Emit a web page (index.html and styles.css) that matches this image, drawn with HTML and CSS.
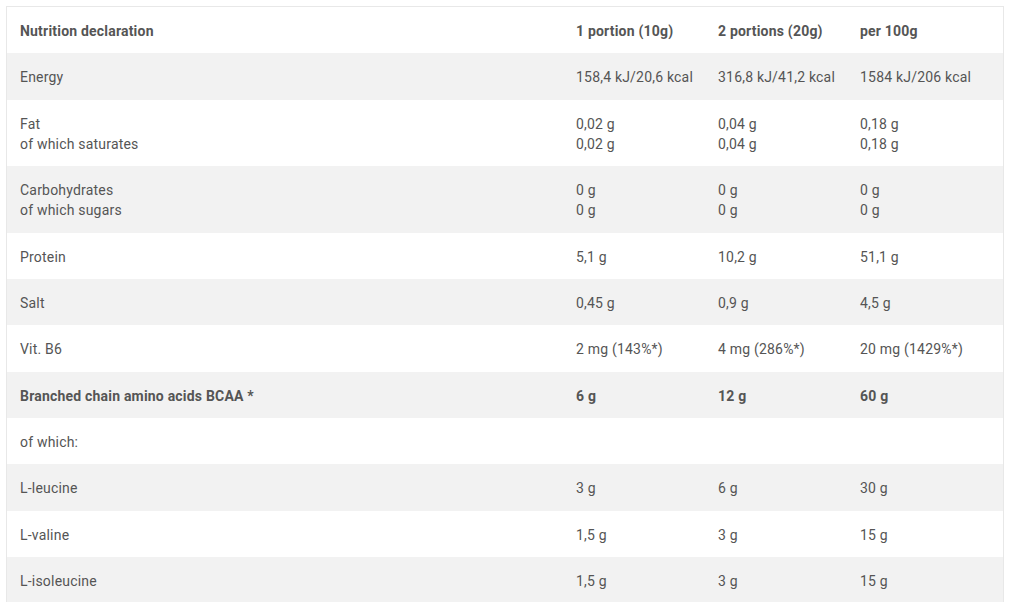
FILE: index.html
```html
<!DOCTYPE html>
<html>
<head>
<meta charset="utf-8">
<link rel="stylesheet" href="styles.css">
</head>
<body>
<div class="wrap">
<table class="nutri">
  <colgroup>
    <col class="c-name"><col class="c-val"><col class="c-val"><col class="c-last">
  </colgroup>
  <thead>
    <tr class="bold"><th>Nutrition declaration</th><th>1 portion (10g)</th><th>2 portions (20g)</th><th>per 100g</th></tr>
  </thead>
  <tbody>
    <tr><td>Energy</td><td>158,4 kJ/20,6 kcal</td><td>316,8 kJ/41,2 kcal</td><td>1584 kJ/206 kcal</td></tr>
    <tr><td>Fat<br>of which saturates</td><td>0,02 g<br>0,02 g</td><td>0,04 g<br>0,04 g</td><td>0,18 g<br>0,18 g</td></tr>
    <tr><td>Carbohydrates<br>of which sugars</td><td>0 g<br>0 g</td><td>0 g<br>0 g</td><td>0 g<br>0 g</td></tr>
    <tr><td>Protein</td><td>5,1 g</td><td>10,2 g</td><td>51,1 g</td></tr>
    <tr><td>Salt</td><td>0,45 g</td><td>0,9 g</td><td>4,5 g</td></tr>
    <tr><td>Vit. B6</td><td>2 mg (143%*)</td><td>4 mg (286%*)</td><td>20 mg (1429%*)</td></tr>
    <tr class="bold"><td>Branched chain amino acids BCAA *</td><td>6 g</td><td>12 g</td><td>60 g</td></tr>
    <tr><td>of which:</td><td></td><td></td><td></td></tr>
    <tr><td>L-leucine</td><td>3 g</td><td>6 g</td><td>30 g</td></tr>
    <tr><td>L-valine</td><td>1,5 g</td><td>3 g</td><td>15 g</td></tr>
    <tr><td>L-isoleucine</td><td>1,5 g</td><td>3 g</td><td>15 g</td></tr>
  </tbody>
</table>
</div>
</body>
</html>
```
FILE: styles.css
```css
html, body {
  margin: 0;
  padding: 0;
  background: #ffffff;
}
.wrap {
  padding: 6px 9px 0 6px;
}
.nutri {
  width: 100%;
  table-layout: fixed;
  border-collapse: separate;
  border-spacing: 0;
  border: 1px solid #e8e8e8;
  border-bottom: none;
  font-family: Roboto, "Liberation Sans", sans-serif;
  font-size: 14px;
  letter-spacing: 0.2px;
  line-height: 20.3px;
  color: #555555;
}
.c-name { width: 556px; }
.c-val { width: 142px; }
.nutri th, .nutri td {
  text-align: left;
  vertical-align: top;
  padding: 14px 13px 12px;
  font-weight: 400;
  white-space: nowrap;
}
.nutri tr.bold th, .nutri tr.bold td {
  font-weight: 700;
}
.nutri tbody tr:nth-child(odd) {
  background: #f2f2f2;
}
```
